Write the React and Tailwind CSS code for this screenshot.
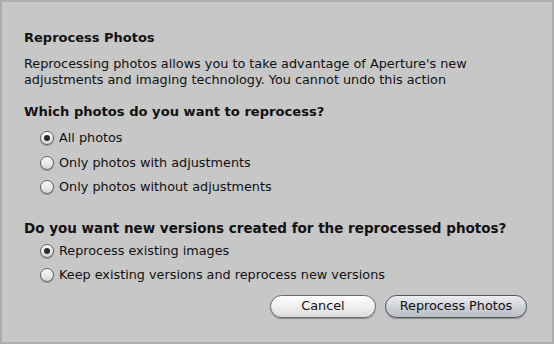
import React from 'react';

const Radio = ({ checked, label }) => (
  <label className="flex items-center h-[24.5px]">
    <span className="w-[14px] h-[14px] rounded-full border border-[#5f5f5f] bg-gradient-to-b from-[#ffffff] to-[#d4d4d4] shadow-[0_1px_1px_rgba(0,0,0,0.25)] flex items-center justify-center">
      {checked && <span className="w-[6px] h-[6px] rounded-full bg-[#2a2a2a]" />}
    </span>
    <span className="ml-[5px]">{label}</span>
  </label>
);

export default function App() {
  return (
    <div
      className="w-[554px] h-[344px] bg-[#c7c7c7] border-2 border-[#adadad] text-[#111] text-[12.8px] leading-[16px] pl-[22px] pr-[24px] pt-[27px]"
      style={{ fontFamily: '"DejaVu Sans", sans-serif' }}
    >
      <h1 className="font-bold text-[13px] leading-[18px]">Reprocess Photos</h1>
      <p className="mt-[9px]">
        Reprocessing photos allows you to take advantage of Aperture's new
        <br />
        adjustments and imaging technology. You cannot undo this action
      </p>

      <h2 className="mt-[15px] font-bold text-[13.1px] leading-[18px]">Which photos do you want to reprocess?</h2>
      <div className="mt-[5px] pl-[16px] flex flex-col">
        <Radio checked label="All photos" />
        <Radio label="Only photos with adjustments" />
        <Radio label="Only photos without adjustments" />
      </div>

      <h2 className="mt-[19px] font-bold text-[13.5px] leading-[18px]">Do you want new versions created for the reprocessed photos?</h2>
      <div className="mt-[2px] pl-[16px] flex flex-col">
        <Radio checked label="Reprocess existing images" />
        <Radio label="Keep existing versions and reprocess new versions" />
      </div>

      <div className="mt-[7px] flex justify-end gap-[9px] pr-[1px]">
        <button className="w-[106px] h-[23px] rounded-full border border-[#6b6b6b] bg-gradient-to-b from-[#ffffff] via-[#f0f0f0] to-[#dcdcdc] shadow-[0_1px_1px_rgba(0,0,0,0.3)] text-[12.8px]">
          Cancel
        </button>
        <button className="w-[142px] h-[23px] rounded-full border border-[#555] bg-gradient-to-b from-[#eef0f3] via-[#cfd2d8] to-[#b9bdc4] shadow-[0_1px_1px_rgba(0,0,0,0.3)] text-[12.8px]">
          Reprocess Photos
        </button>
      </div>
    </div>
  );
}
